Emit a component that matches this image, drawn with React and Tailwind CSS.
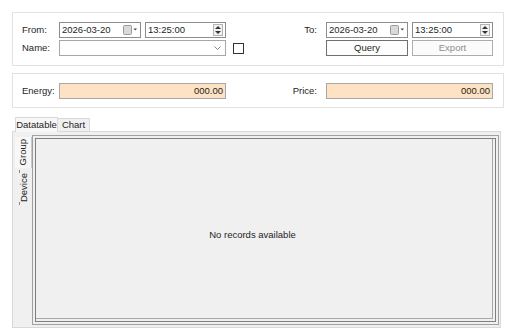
import React from 'react';

// Small calendar glyph + dropdown arrow used in the date pickers
function CalendarDrop() {
  return (
    <svg width="15" height="10" viewBox="0 0 15 10" className="shrink-0">
      <rect x="0.5" y="0.5" width="8" height="9" rx="1" fill="#d9d9d9" stroke="#9a9a9a" />
      <path d="M10.5 3.5 L14 3.5 L12.25 5.5 Z" fill="#444" />
    </svg>
  );
}

function Spinner() {
  return (
    <div className="flex h-[12px] w-[10px] shrink-0 flex-col items-center justify-center gap-[2px] border border-[#b4b4b4] bg-[#f2f2f2]">
      <svg width="6" height="3" viewBox="0 0 6 3"><path d="M0 3 L3 0 L6 3 Z" fill="#333" /></svg>
      <svg width="6" height="3" viewBox="0 0 6 3"><path d="M0 0 L6 0 L3 3 Z" fill="#333" /></svg>
    </div>
  );
}

function DateBox() {
  return (
    <div className="flex h-4 w-[82px] items-center border border-[#8c8c8c] bg-white pl-[2px] pr-[2px]">
      <span className="flex-1 leading-none">2026-03-20</span>
      <CalendarDrop />
    </div>
  );
}

function TimeBox() {
  return (
    <div className="ml-[4px] flex h-4 w-[81px] items-center border border-[#8c8c8c] bg-white pl-[2px] pr-[2px]">
      <span className="flex-1 leading-none">13:25:00</span>
      <Spinner />
    </div>
  );
}

function PeachField() {
  return (
    <div className="flex h-4 w-[167px] items-center justify-end border border-[#a8a8a8] bg-[#fde2c3] pr-[2px]">
      <span className="leading-none">000.00</span>
    </div>
  );
}

export default function App() {
  return (
    <div className="relative h-[336px] w-[512px] overflow-hidden bg-white px-3 pt-3 font-['Liberation_Sans',Arial,sans-serif] text-[9.5px] text-[#1e1e1e]">
      {/* query group */}
      <div className="flex w-[492px] justify-between border border-[#e2e2e2] bg-white py-[9px] pl-[9px] pr-[10px]">
        <div className="flex flex-col gap-[2px]">
          <div className="flex items-center">
            <span className="w-[37px]">From:</span>
            <DateBox />
            <TimeBox />
          </div>
          <div className="flex items-center">
            <span className="w-[37px]">Name:</span>
            <div className="flex h-4 w-[167px] items-center justify-end border border-[#a6a6a6] bg-white pr-[4px]">
              <svg width="7" height="4" viewBox="0 0 7 4"><path d="M0.5 0.5 L3.5 3.5 L6.5 0.5" fill="none" stroke="#8a8a8a" /></svg>
            </div>
            <div className="ml-[7px] h-[11px] w-[11px] border border-[#333] bg-white" />
          </div>
        </div>
        <div className="flex flex-col items-end gap-[2px]">
          <div className="flex items-center">
            <span className="mr-[9px]">To:</span>
            <DateBox />
            <TimeBox />
          </div>
          <div className="flex items-center">
            <button className="flex h-4 w-[82px] items-center justify-center border border-[#6f6f6f] bg-[#fdfdfd] leading-none">Query</button>
            <button className="ml-[4px] flex h-4 w-[81px] items-center justify-center border border-[#adadad] bg-[#fbfbfb] leading-none text-[#8d8d8d]">Export</button>
          </div>
        </div>
      </div>

      {/* totals group */}
      <div className="mt-[7px] flex w-[492px] items-center justify-between border border-[#e2e2e2] bg-white pt-[9px] pb-[8px] pl-[9px] pr-[10px]">
        <div className="flex items-center">
          <span className="w-[37px]">Energy:</span>
          <PeachField />
        </div>
        <div className="flex items-center">
          <span className="mr-[9px]">Price:</span>
          <PeachField />
        </div>
      </div>

      {/* tab header */}
      <div className="mt-[9px] flex items-end pl-[3px]">
        <div className="relative z-10 -mb-px flex h-[15px] w-[43px] items-center justify-center border border-b-0 border-[#d9d9d9] bg-[#f7f7f7] leading-none">Datatable</div>
        <div className="flex h-[13px] w-[32px] items-center justify-center border border-b-0 border-l-0 border-[#d9d9d9] bg-[#f0f0f0] leading-none">Chart</div>
      </div>

      {/* tab panel */}
      <div className="flex h-[197px] w-[489px] border border-[#d9d9d9] bg-[#f0f0f0] pt-[3px] pl-[2px]">
        <div className="mt-[2px] flex w-[17px] flex-col">
          <div className="flex h-[31px] items-center justify-center border-r border-[#c8c8c8] bg-[#f7f7f7]">
            <span className="rotate-180 leading-none [writing-mode:vertical-rl]">Group</span>
          </div>
          <div className="mt-[2px] flex h-[35px] flex-col items-start">
            <div className="ml-[4px] h-[4px] w-px bg-[#888]" />
            <div className="flex flex-1 w-full items-center justify-center">
              <span className="rotate-180 leading-none [writing-mode:vertical-rl]">Device</span>
            </div>
            <div className="ml-[4px] h-[4px] w-px bg-[#888]" />
          </div>
        </div>
        <div className="h-[190px] w-[467px] border border-[#a0a0a0] p-[2px]">
          <div className="flex h-full w-full items-center justify-center border border-[#7f7f7f] pt-[11px] pr-[26px] shadow-[inset_-2px_-2px_0_#f0f0f0,inset_-3px_-3px_0_#a8a8a8]">
            <span>No records available</span>
          </div>
        </div>
      </div>
    </div>
  );
}
